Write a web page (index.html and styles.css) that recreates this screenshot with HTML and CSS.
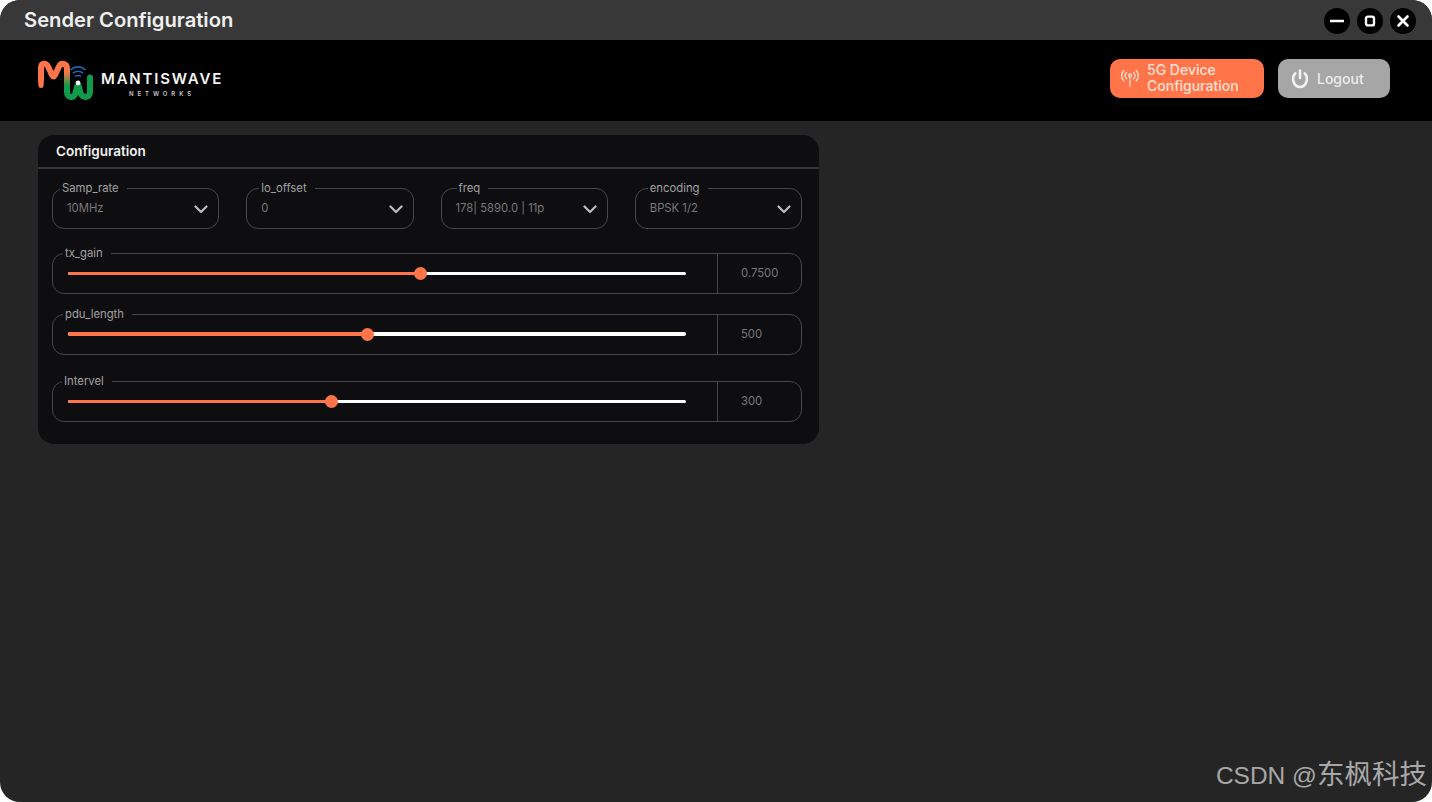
FILE: index.html
```html
<!DOCTYPE html>
<html lang="en">
<head>
    <meta charset="UTF-8">
    <meta name="viewport" content="width=device-width, initial-scale=1.0">
    <title>Sender Configuration</title>
    <link rel="stylesheet" href="styles.css">
</head>
<body>
    <div class="window">
        <div class="title-bar">
            <h1>Sender Configuration</h1>
            <div class="window-controls">
                <button class="win-btn" aria-label="Minimize">
                    <svg width="14" height="14" viewBox="0 0 14 14"><path d="M1 7H13" stroke="#fff" stroke-width="2.6" stroke-linecap="round"/></svg>
                </button>
                <button class="win-btn" aria-label="Maximize">
                    <svg width="14" height="14" viewBox="0 0 14 14"><rect x="3" y="2.6" width="8" height="8.8" rx="2" fill="none" stroke="#fff" stroke-width="2.4"/></svg>
                </button>
                <button class="win-btn" aria-label="Close">
                    <svg width="14" height="14" viewBox="0 0 14 14"><path d="M2.5 2.5L11.5 11.5M11.5 2.5L2.5 11.5" stroke="#fff" stroke-width="2.6" stroke-linecap="round"/></svg>
                </button>
            </div>
        </div>

        <header class="top-header">
            <div class="logo">
                <svg class="logo-mark" width="60" height="40" viewBox="36 60 60 40">
                    <defs>
                        <linearGradient id="mwFade" gradientUnits="userSpaceOnUse" x1="0" y1="72" x2="0" y2="86">
                            <stop offset="0" stop-color="#ff7448"/>
                            <stop offset="1" stop-color="#0f9a4c"/>
                        </linearGradient>
                    </defs>
                    <path d="M41 80V68C41 62.500 46 62.500 48 66.500L52 75C53 77 54 77 55 75L59 66.500C61 62.500 67 63 67 69" fill="none" stroke="#ff7448" stroke-width="6"/>
                    <circle cx="41" cy="85.500" r="2.500" fill="#ff7448"/>
                    <path d="M38 80H44L43.500 85H38.500Z" fill="#ff7448"/>
                    <path d="M67 69V92C67 98.500 74 98.500 75.500 93L77.500 85" fill="none" stroke="url(#mwFade)" stroke-width="6"/>
                    <path d="M78.500 85L80.500 93C82 98.500 90 98.500 90 92V77.500" fill="none" stroke="#0f9a4c" stroke-width="6" stroke-linecap="round"/>
                    <circle cx="78" cy="83" r="2.400" fill="#fff"/>
                    <path d="M70.500 70C75 65.800 81 65.800 85.500 70M72.800 73.200C76 70.800 80 70.800 83.200 73.200M75 76.500C77 75.200 79 75.200 81 76.500" fill="none" stroke="#1c63ad" stroke-width="1.600"/>
                </svg>
                <div class="logo-text">
                    <span class="logo-name">MANTISWAVE</span>
                    <span class="logo-sub">NETWORKS</span>
                </div>
            </div>
            <div class="header-actions">
                <button class="btn btn-device">
                    <svg width="20" height="20" viewBox="0 0 20 20" fill="none" stroke="#ffe1d6" stroke-width="1.300" stroke-linecap="round">
                        <circle cx="10" cy="7.500" r="1.500"/>
                        <path d="M10 9V18"/>
                        <path d="M6.500 4.500C4.800 6.300 4.800 9 6.500 10.800M13.500 4.500C15.200 6.300 15.200 9 13.500 10.800"/>
                        <path d="M3.800 2.500C1 5.500 1 10 3.800 13M16.200 2.500C19 5.500 19 10 16.200 13"/>
                    </svg>
                    <span>5G Device Configuration</span>
                </button>
                <button class="btn btn-logout">
                    <svg width="20" height="20" viewBox="0 0 20 20" fill="none" stroke="#f2f2f2" stroke-width="2.600" stroke-linecap="round">
                        <path d="M10 1.500V9"/>
                        <path d="M5.300 4.500C1 8.500 3.500 18 10 18C16.500 18 19 8.500 14.700 4.500"/>
                    </svg>
                    <span>Logout</span>
                </button>
            </div>
        </header>

        <main class="content">
            <section class="card">
                <div class="card-head">Configuration</div>
                <div class="card-body">
                    <div class="select-row">
                        <fieldset class="field">
                            <legend class="lg-samp">Samp_rate</legend>
                            <div class="field-body select-body">
                                <span class="field-value">10MHz</span>
                                <svg class="chevron" width="14" height="9" viewBox="0 0 14 9"><path d="M1.500 1.500L7 7L12.500 1.500" fill="none" stroke="#bdbdbd" stroke-width="2.200" stroke-linecap="round" stroke-linejoin="round"/></svg>
                            </div>
                        </fieldset>
                        <fieldset class="field">
                            <legend class="lg-offset">lo_offset</legend>
                            <div class="field-body select-body">
                                <span class="field-value">0</span>
                                <svg class="chevron" width="14" height="9" viewBox="0 0 14 9"><path d="M1.500 1.500L7 7L12.500 1.500" fill="none" stroke="#bdbdbd" stroke-width="2.200" stroke-linecap="round" stroke-linejoin="round"/></svg>
                            </div>
                        </fieldset>
                        <fieldset class="field">
                            <legend class="lg-freq">freq</legend>
                            <div class="field-body select-body">
                                <span class="field-value">178| 5890.0 | 11p</span>
                                <svg class="chevron" width="14" height="9" viewBox="0 0 14 9"><path d="M1.500 1.500L7 7L12.500 1.500" fill="none" stroke="#bdbdbd" stroke-width="2.200" stroke-linecap="round" stroke-linejoin="round"/></svg>
                            </div>
                        </fieldset>
                        <fieldset class="field">
                            <legend class="lg-encoding">encoding</legend>
                            <div class="field-body select-body">
                                <span class="field-value">BPSK 1/2</span>
                                <svg class="chevron" width="14" height="9" viewBox="0 0 14 9"><path d="M1.500 1.500L7 7L12.500 1.500" fill="none" stroke="#bdbdbd" stroke-width="2.200" stroke-linecap="round" stroke-linejoin="round"/></svg>
                            </div>
                        </fieldset>
                    </div>

                    <fieldset class="field slider-field gain-field">
                        <legend class="lg-slider">tx_gain</legend>
                        <div class="field-body">
                            <div class="slider">
                                <div class="slider-fill" style="width: 57%"><span class="slider-thumb"></span></div>
                            </div>
                            <div class="slider-value">0.7500</div>
                        </div>
                    </fieldset>
                    <fieldset class="field slider-field pdu-field">
                        <legend class="lg-slider">pdu_length</legend>
                        <div class="field-body">
                            <div class="slider">
                                <div class="slider-fill" style="width: 48.4%"><span class="slider-thumb"></span></div>
                            </div>
                            <div class="slider-value">500</div>
                        </div>
                    </fieldset>
                    <fieldset class="field slider-field interval-field">
                        <legend class="lg-interval">Intervel</legend>
                        <div class="field-body">
                            <div class="slider">
                                <div class="slider-fill" style="width: 42.6%"><span class="slider-thumb"></span></div>
                            </div>
                            <div class="slider-value">300</div>
                        </div>
                    </fieldset>
                </div>
            </section>
        </main>

        <div class="watermark">CSDN @<span class="watermark-cjk">东枫科技</span></div>
    </div>
</body>
</html>
```

FILE: styles.css
```css
* {
    box-sizing: border-box;
}

html,
body {
    height: 100%;
}

body {
    margin: 0;
    background-color: #fff;
    font-family: 'Inter', 'Noto Sans', sans-serif;
    overflow: hidden;
}

.window {
    position: relative;
    display: flex;
    flex-direction: column;
    height: 802px;
    background-color: #252525;
    border-radius: 20px;
    overflow: hidden;
}

/* title bar */
.title-bar {
    display: flex;
    justify-content: space-between;
    align-items: center;
    height: 40px;
    padding: 0 16px 0 24px;
    background-color: #383838;
}

.title-bar h1 {
    margin: 0 0 2px;
    font-size: 20.2px;
    font-weight: 600;
    color: #f0f0f0;
}

.window-controls {
    display: flex;
    gap: 7px;
    margin-top: 2px;
}

.win-btn {
    display: flex;
    justify-content: center;
    align-items: center;
    width: 26px;
    height: 26px;
    padding: 0;
    background-color: #000;
    border: none;
    border-radius: 50%;
}

/* header */
.top-header {
    display: flex;
    justify-content: space-between;
    align-items: center;
    height: 81px;
    padding: 0 42px 4px 36px;
    background-color: #000;
}

.logo {
    display: flex;
    align-items: center;
    gap: 5px;
    margin-top: 2px;
}

.logo-text {
    display: flex;
    flex-direction: column;
    align-items: center;
    margin-top: 9px;
}

.logo-name {
    font-size: 15px;
    line-height: 16px;
    font-weight: 600;
    letter-spacing: 1.8px;
    color: #f4f4f4;
}

.logo-sub {
    margin-top: 2px;
    font-size: 6px;
    line-height: 9px;
    font-weight: 600;
    letter-spacing: 3.9px;
    color: #c8c8c8;
}

.header-actions {
    display: flex;
    gap: 14px;
}

.btn {
    display: flex;
    align-items: center;
    height: 39px;
    padding: 0;
    border: none;
    border-radius: 10px;
    font-family: inherit;
    font-size: 14px;
    font-weight: 500;
    line-height: 16px;
    text-align: left;
}

.btn-device {
    gap: 7px;
    width: 154px;
    padding: 0 0 2px 10px;
    background-color: #ff7448;
    color: #ffe1d6;
}

.btn-device span {
    width: 110px;
}

.btn-logout {
    gap: 7px;
    width: 112px;
    padding-left: 12px;
    background-color: #a6a6a6;
    color: #ececec;
}

/* config card */
.content {
    flex: 1;
    padding: 14px 38px;
}

.card {
    width: 781px;
    background-color: #0e0e10;
    border-radius: 16px;
}

.card-head {
    height: 34px;
    padding: 8px 18px 0;
    border-bottom: 2px solid #36363a;
    font-size: 13.5px;
    font-weight: 600;
    line-height: 17px;
    color: #f2f2f2;
}

.card-body {
    padding: 12px 17px 22px 14px;
}

.select-row {
    display: grid;
    grid-template-columns: repeat(4, 1fr);
    gap: 27px;
}

/* the legend sits on the top border, so each field is 7px taller than its box */
.field {
    height: 48px;
    min-width: 0;
    margin: 0;
    padding: 0;
    border: 1px solid #47474b;
    border-radius: 12px;
}

.field legend {
    height: 14px;
    padding: 0 8px 0 2px;
    font-size: 11.3px;
    line-height: 14px;
    color: #a2a2a2;
}

.lg-samp { margin-left: 7px; }
.lg-offset { margin-left: 12px; }
.lg-freq { margin-left: 15px; }
.lg-encoding { margin-left: 12px; padding-right: 6px; }
.lg-slider { margin-left: 10px; }
.lg-interval { margin-left: 9px; }

.field-body {
    display: flex;
    align-items: center;
    height: 40px;
    margin-top: -7px;
}

.select-body {
    justify-content: space-between;
    padding: 0 10px 0 14px;
}

.chevron {
    margin-top: 3px;
}

.field-value {
    font-size: 11.3px;
    color: #787878;
}

.gain-field { margin-top: 17px; }
.pdu-field { margin-top: 13px; }
.interval-field { margin-top: 19px; }

.slider {
    flex: 1;
    height: 3px;
    margin: 0 31px 0 15px;
    background-color: #fff;
    border-radius: 2px;
}

.pdu-field .slider {
    height: 4px;
}

.slider-fill {
    position: relative;
    height: 100%;
    background-color: #ff7448;
    border-radius: 2px;
}

/* thumb hangs off the end of the fill */
.slider-thumb {
    position: absolute;
    top: 50%;
    right: -7px;
    width: 13px;
    height: 13px;
    margin-top: -6.5px;
    background-color: #ff7448;
    border-radius: 50%;
}

.slider-value {
    display: flex;
    align-items: center;
    width: 84px;
    height: 100%;
    padding-left: 23px;
    border-left: 1px solid #47474b;
    font-size: 11.3px;
    color: #787878;
}

.watermark {
    position: absolute;
    right: 5px;
    bottom: 10px;
    font-family: 'Liberation Sans', 'Noto Sans CJK SC', sans-serif;
    font-size: 24.5px;
    line-height: 32px;
    color: #a8a8a8;
}

.watermark-cjk {
    font-family: 'Noto Sans CJK SC', sans-serif;
    font-size: 27.5px;
}
```
